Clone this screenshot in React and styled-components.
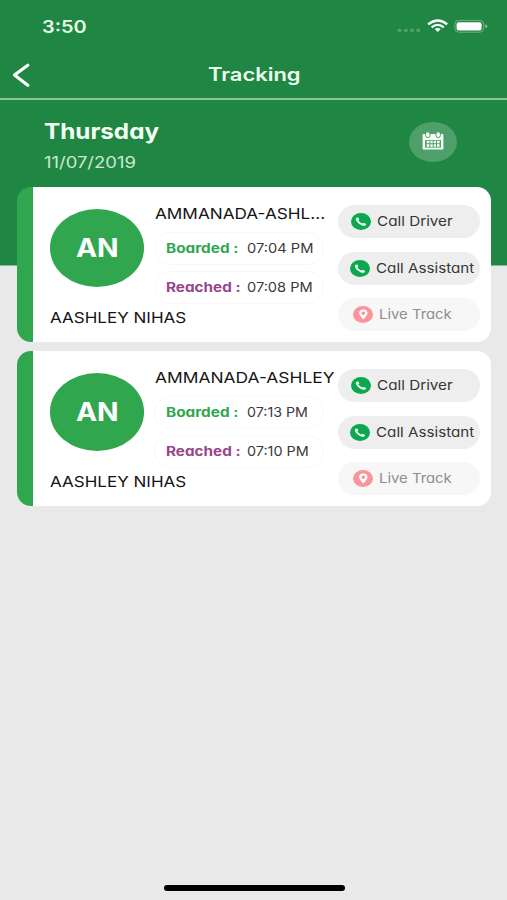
import React from "react";
import styled, { createGlobalStyle } from "styled-components";

const GlobalStyle = createGlobalStyle`
	* {
		box-sizing: border-box;
	}
	body {
		margin: 0;
		background: #e9e9e9;
		font-family: Inter, "Liberation Sans", sans-serif;
		font-feature-settings: "cv11";
	}
`;

const Screen = styled.div`
	display: flex;
	flex-direction: column;
	height: 900px;
	overflow: hidden;
	background: linear-gradient(#1f8643 265px, #e9e9e9 266px);
`;

// wide lettering, $wide is the horizontal stretch
const Text = styled.span`
	display: block;
	white-space: pre;
	transform: scaleX(${(props) => props.$wide || 1});
	transform-origin: left center;
`;

const StatusBar = styled.div`
	display: flex;
	align-items: center;
	height: 53px;
	padding: 0 18px 0 42px;
`;
const Clock = styled(Text)`
	flex: 1;
	font-size: 17px;
	font-weight: 600;
	line-height: 20px;
	color: #e9fbe6;
`;
const StatusIcons = styled.svg`
	display: block;
	width: 92px;
	height: 20px;
	margin-top: -1px;
`;

const NavBar = styled.div`
	display: flex;
	align-items: center;
	height: 47px;
	padding: 0 0 5px 11px;
	border-bottom: 2px solid #8fc59c;
`;
const BackIcon = styled.svg`
	display: block;
	width: 20px;
	height: 26px;
	margin-top: 3px;
`;
const Title = styled(Text)`
	margin: 4px 0 0 177px;
	font-size: 18px;
	font-weight: 600;
	line-height: 24px;
	color: #ecfdee;
	font-feature-settings: normal;
`;

const DateHeader = styled.div`
	display: flex;
	justify-content: space-between;
	height: 87px;
	padding: 18px 50px 0 44px;
`;
const Day = styled(Text)`
	margin-top: 1px;
	font-size: 21px;
	font-weight: 700;
	line-height: 26px;
	color: #f4fff4;
`;
const DateText = styled(Text)`
	margin-top: 8px;
	font-size: 15.5px;
	line-height: 20px;
	color: #cfe8d2;
`;
const CalendarButton = styled.div`
	display: flex;
	align-items: center;
	justify-content: center;
	width: 48px;
	height: 40px;
	margin-top: 4px;
	border-radius: 50%;
	background: #4f9f6a;
`;
const CalendarSvg = styled.svg`
	display: block;
	width: 22px;
	height: 19px;
	margin-top: -4px;
`;

const List = styled.div`
	display: flex;
	flex-direction: column;
	gap: 9px;
	padding: 0 16px 0 17px;
`;
const Card = styled.div`
	display: grid;
	grid-template-columns: 105.5px 183px 142px;
	height: 155px;
	padding-left: 16.5px;
	border-left: 16px solid #30a74f;
	border-radius: 14px;
	background: #fff;
`;
const Person = styled.div`
	padding-top: 22px;
`;
const Avatar = styled.div`
	display: flex;
	align-items: center;
	justify-content: center;
	width: 94.5px;
	height: 77.5px;
	border-radius: 50%;
	background: #30a74f;
`;
const Initials = styled(Text)`
	font-size: 25.5px;
	font-weight: 700;
	color: #fff;
	transform-origin: center;
`;
const Name = styled(Text)`
	margin-top: ${(props) => props.$top || 0}px;
	font-size: 15px;
	line-height: 20px;
	color: #151515;
`;
const Trip = styled.div`
	padding-top: 17px;
`;
const TimePill = styled.div`
	display: grid;
	grid-template-columns: 81px 1fr;
	align-items: center;
	width: 170px;
	height: 33px;
	margin: ${(props) => props.$top}px 0 0 -1px;
	padding: 0 0 1px 10.5px;
	border: 1px solid #f8f8f8;
	border-radius: 17px;
`;
const TimeLabel = styled(Text)`
	font-size: 13px;
	font-weight: 700;
	line-height: 18px;
	color: ${(props) => props.$color};
`;
const Time = styled(Text)`
	font-size: 13.5px;
	line-height: 18px;
	color: #3a3a3a;
`;

const Actions = styled.div`
	display: flex;
	flex-direction: column;
	gap: 13.5px;
	padding-top: 18px;
`;
const Action = styled.div`
	display: flex;
	align-items: center;
	width: 142px;
	height: 33px;
	padding-left: ${(props) => props.$left}px;
	border-radius: 17px;
	background: ${(props) => (props.$faded ? "#f7f7f7" : "#eeeeee")};
	color: ${(props) => (props.$faded ? "#8e8e8e" : "#363636")};
`;
const ActionSvg = styled.svg`
	display: block;
	flex: none;
	width: 20px;
	height: 17px;
	margin-right: ${(props) => props.$gap}px;
`;
const ActionText = styled(Text)`
	margin-top: -1px;
	font-size: 13.5px;
	line-height: 18px;
`;

const Footer = styled.div`
	display: flex;
	justify-content: center;
	margin-top: auto;
	padding: 0 0 9px 1px;
`;
const HomeBar = styled.div`
	width: 181px;
	height: 6px;
	border-radius: 3px;
	background: #000;
`;

const StatusGlyphs = () => (
	<StatusIcons viewBox="0 0 92 20">
		<g fill="#4fa366">
			<ellipse cx="2.5" cy="14.4" rx="2.1" ry="1.8" />
			<ellipse cx="8.8" cy="14.4" rx="2.1" ry="1.8" />
			<ellipse cx="15" cy="14.4" rx="2.1" ry="1.8" />
			<ellipse cx="21.2" cy="14.4" rx="2.1" ry="1.8" />
		</g>
		<g fill="none" stroke="#fff" strokeWidth="2.3">
			<path d="M31.2 8.3 Q40.7 0.6 50.2 8.3" />
			<path d="M34.6 11.4 Q40.7 6.4 46.8 11.4" />
		</g>
		<path d="M37.6 13 Q40.7 10.8 43.8 13 L40.7 16 Z" fill="#fff" />
		<rect x="57.9" y="4.4" width="28.8" height="11.8" rx="3.8" fill="none" stroke="#6fb480" />
		<rect x="59.6" y="6.2" width="25" height="8.2" rx="2" fill="#fff" />
		<path d="M88.2 8.2 Q90.4 8.8 90.4 10.3 Q90.4 11.8 88.2 12.4 Z" fill="#7fbd8d" />
	</StatusIcons>
);

const CalendarIcon = () => (
	<CalendarSvg viewBox="0 0 22 19">
		<path d="M1.6 3 H20.4 Q21.4 3 21.4 4 V17.4 Q21.4 18.4 20.4 18.4 H1.6 Q0.6 18.4 0.6 17.4 V4 Q0.6 3 1.6 3 Z" fill="#f6fff6" />
		<rect x="3.6" y="0.8" width="4.4" height="5.8" rx="2.2" fill="#f6fff6" stroke="#4f9f6a" />
		<rect x="14" y="0.8" width="4.4" height="5.8" rx="2.2" fill="#f6fff6" stroke="#4f9f6a" />
		<rect x="3" y="9" width="16" height="7.6" fill="#4f9f6a" />
		<g fill="#f6fff6">
			<path d="M4.6 9.8 H7.4 V12.2 H4.6 Z M8.4 9.8 H10.7 V12.2 H8.4 Z M11.7 9.8 H14 V12.2 H11.7 Z M15 9.8 H17.6 V12.2 H15 Z" />
			<path d="M4.6 13.3 H7.4 V15.7 H4.6 Z M8.4 13.3 H10.7 V15.7 H8.4 Z M11.7 13.3 H14 V15.7 H11.7 Z M15 13.3 H17.6 V15.7 H15 Z" />
		</g>
	</CalendarSvg>
);

const PhoneIcon = ({ gap }) => (
	<ActionSvg $gap={gap} viewBox="0 0 20 17">
		<ellipse cx="10" cy="8.5" rx="10" ry="8.5" fill="#0da750" />
		<path
			d="M5.2 4.9 Q6.3 4.2 7.4 4.6 L8.3 6.5 Q8.3 7 7.3 7.6 Q8.8 9.5 11.2 10.5 Q12 9.8 12.7 9.9 L14.9 10.7 Q15.4 11.6 14.4 12.4 Q13 13.1 10.6 12.2 Q6 10.2 4.8 6.6 Q4.6 5.4 5.2 4.9 Z"
			fill="#e9fff0"
		/>
	</ActionSvg>
);

const PinIcon = ({ gap }) => (
	<ActionSvg $gap={gap} viewBox="0 0 20 17">
		<ellipse cx="10" cy="8.5" rx="10" ry="8.5" fill="#fb959b" />
		<path
			fillRule="evenodd"
			d="M10.3 3.4 Q14.6 3.6 14.6 7.1 Q14.3 9.6 10.3 13.5 Q6.3 9.6 6 7.1 Q6 3.6 10.3 3.4 Z M10.3 5.4 A1.9 1.8 0 1 0 10.3 9 A1.9 1.8 0 1 0 10.3 5.4 Z"
			fill="#fff"
		/>
	</ActionSvg>
);

const trips = [
	{
		id: 1,
		initials: "AN",
		name: "AASHLEY NIHAS",
		route: "AMMANADA-ASHL...",
		routeWide: 1.145,
		boarded: "07:04 PM",
		boardedWide: 1.085,
		reached: "07:08 PM",
		reachedWide: 1.08,
	},
	{
		id: 2,
		initials: "AN",
		name: "AASHLEY NIHAS",
		route: "AMMANADA-ASHLEY",
		routeWide: 1.16,
		boarded: "07:13 PM",
		boardedWide: 1.055,
		reached: "07:10 PM",
		reachedWide: 1.065,
	},
];

const TripCard = (props) => {
	const { trip } = props;
	return (
		<Card>
			<Person>
				<Avatar>
					<Initials $wide={1.11}>{trip.initials}</Initials>
				</Avatar>
				<Name $top={21.5} $wide={1.135}>{trip.name}</Name>
			</Person>
			<Trip>
				<Name $wide={trip.routeWide}>{trip.route}</Name>
				<TimePill $top={8}>
					<TimeLabel $color="#30a74f" $wide={1.18}>Boarded :</TimeLabel>
					<Time $wide={trip.boardedWide}>{trip.boarded}</Time>
				</TimePill>
				<TimePill $top={6}>
					<TimeLabel $color="#98458a" $wide={1.175}>Reached :</TimeLabel>
					<Time $wide={trip.reachedWide}>{trip.reached}</Time>
				</TimePill>
			</Trip>
			<Actions>
				<Action $left={13}>
					<PhoneIcon gap={6} />
					<ActionText $wide={1.13}>Call Driver</ActionText>
				</Action>
				<Action $left={12}>
					<PhoneIcon gap={6} />
					<ActionText $wide={1.125}>Call Assistant</ActionText>
				</Action>
				<Action $left={15} $faded>
					<PinIcon gap={6} />
					<ActionText $wide={1.1}>Live Track</ActionText>
				</Action>
			</Actions>
		</Card>
	);
};

const App = () => {
	return (
		<Screen>
			<GlobalStyle />
			<StatusBar>
				<Clock $wide={1.17}>3:50</Clock>
				<StatusGlyphs />
			</StatusBar>
			<NavBar>
				<BackIcon viewBox="0 0 20 26">
					<path d="M16.8 3.3 L3.5 13 L16.8 23.2" fill="none" stroke="#fff" strokeWidth="3.2" strokeLinecap="round" strokeLinejoin="round" />
				</BackIcon>
				<Title $wide={1.22}>Tracking</Title>
			</NavBar>
			<DateHeader>
				<div>
					<Day $wide={1.155}>Thursday</Day>
					<DateText $wide={1.19}>11/07/2019</DateText>
				</div>
				<CalendarButton>
					<CalendarIcon />
				</CalendarButton>
			</DateHeader>
			<List>
				{trips.map((trip) => (
					<TripCard key={trip.id} trip={trip} />
				))}
			</List>
			<Footer>
				<HomeBar />
			</Footer>
		</Screen>
	);
};

export default App;
